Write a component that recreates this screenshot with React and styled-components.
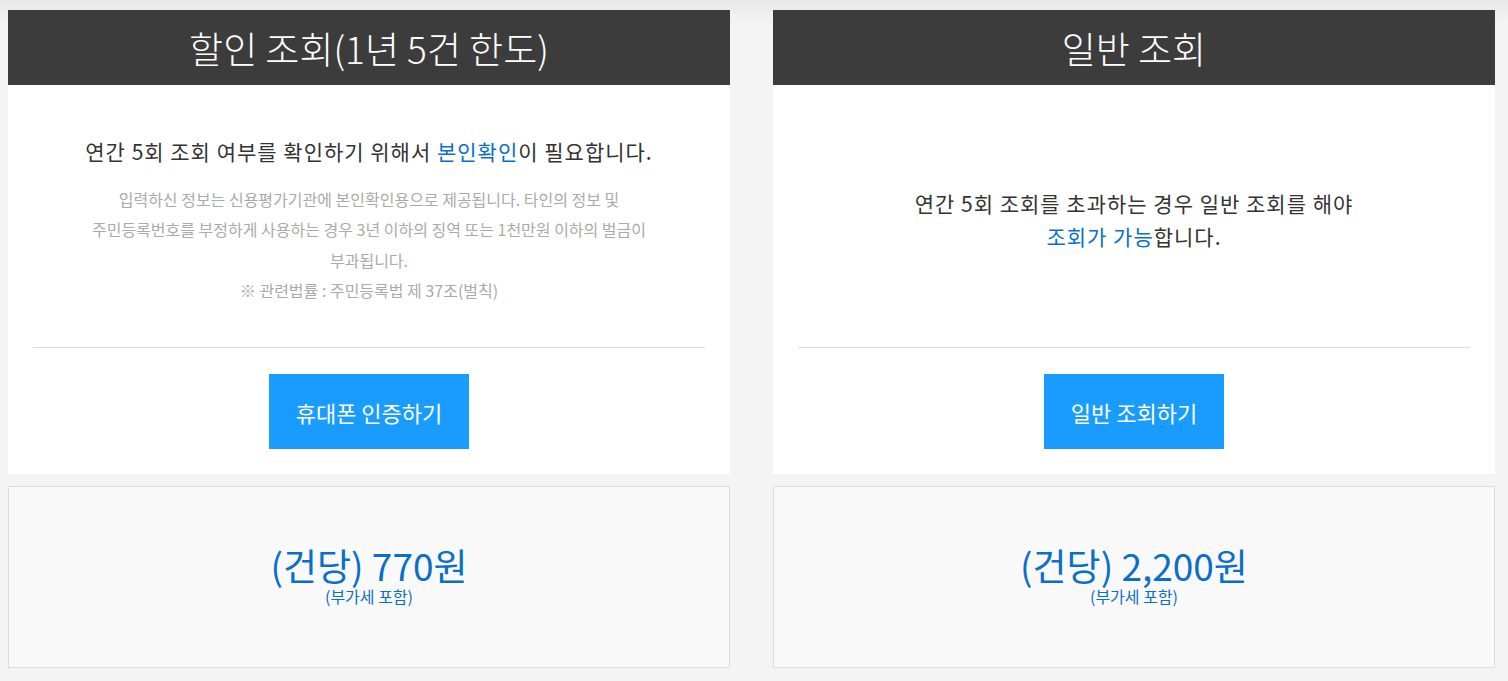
import styled, { createGlobalStyle } from "styled-components";

const GlobalStyle = createGlobalStyle`
  html, body {
    margin: 0;
    padding: 0;
  }

  body {
    background: linear-gradient(#e8e8e8, #f4f4f4 24px) #f4f4f4;
    font-family: "Noto Sans CJK KR", "Noto Sans", sans-serif;
  }
`;

const Page = styled.div`
  display: grid;
  grid-template-columns: 722px 722px;
  column-gap: 43px;
  padding: 10px 13px 13px 8px;
`;

const Column = styled.section`
  display: flex;
  flex-direction: column;
  gap: 12px;
`;

const Card = styled.div`
  background: #fff;
`;

const Header = styled.h2`
  margin: 0;
  height: 75px;
  display: flex;
  align-items: center;
  justify-content: center;
  background: #3c3c3c;
  color: #fff;
  font-size: 37px;
  font-weight: 300;
`;

const Body = styled.div`
  padding: 0 25px 25px;
`;

const Info = styled.div`
  box-sizing: border-box;
  height: 263px;
  padding-top: 8px;
  display: flex;
  flex-direction: column;
  align-items: center;
  justify-content: center;
  text-align: center;
  border-bottom: 1px solid #dcdcdc;
`;

const Lead = styled.p`
  margin: 0;
  font-size: 21px;
  line-height: 33px;
  color: #333;
  letter-spacing: 1px;
`;

const Blue = styled.span`
  color: #0a6fc9;
`;

const Notice = styled.p`
  margin: 16px 0 0;
  font-size: 16px;
  line-height: 30.5px;
  color: #aaa;
`;

const Actions = styled.div`
  display: flex;
  justify-content: center;
  padding-top: 26px;
`;

const Button = styled.button`
  width: ${(p) => p.$width}px;
  height: 75px;
  border: 0;
  background: #1a9cff;
  color: #fff;
  font-family: inherit;
  font-size: 22px;
  font-weight: 400;
  cursor: pointer;
`;

const Price = styled.div`
  height: 180px;
  border: 1px solid #dcdcdc;
  background: #f9f9f9;
  display: flex;
  flex-direction: column;
  align-items: center;
  justify-content: center;
  color: #0a6fc9;
`;

const Amount = styled.div`
  font-size: 37px;
  line-height: 42px;
`;

const Vat = styled.div`
  font-size: 16px;
  line-height: 20px;
  margin-bottom: 4px;
`;

function App() {
  return (
    <>
      <GlobalStyle />
      <Page>
        <Column>
          <Card>
            <Header>할인 조회(1년 5건 한도)</Header>
            <Body>
              <Info>
                <Lead>
                  연간 5회 조회 여부를 확인하기 위해서 <Blue>본인확인</Blue>이 필요합니다.
                </Lead>
                <Notice>
                  입력하신 정보는 신용평가기관에 본인확인용으로 제공됩니다. 타인의 정보 및
                  <br />
                  주민등록번호를 부정하게 사용하는 경우 3년 이하의 징역 또는 1천만원 이하의 벌금이
                  <br />
                  부과됩니다.
                  <br />※ 관련법률 : 주민등록법 제 37조(벌칙)
                </Notice>
              </Info>
              <Actions>
                <Button $width={200}>휴대폰 인증하기</Button>
              </Actions>
            </Body>
          </Card>
          <Price>
            <Amount>(건당) 770원</Amount>
            <Vat>(부가세 포함)</Vat>
          </Price>
        </Column>
        <Column>
          <Card>
            <Header>일반 조회</Header>
            <Body>
              <Info>
                <Lead>
                  연간 5회 조회를 초과하는 경우 일반 조회를 해야
                  <br />
                  <Blue>조회가 가능</Blue>합니다.
                </Lead>
              </Info>
              <Actions>
                <Button $width={180}>일반 조회하기</Button>
              </Actions>
            </Body>
          </Card>
          <Price>
            <Amount>(건당) 2,200원</Amount>
            <Vat>(부가세 포함)</Vat>
          </Price>
        </Column>
      </Page>
    </>
  );
}

export default App;
